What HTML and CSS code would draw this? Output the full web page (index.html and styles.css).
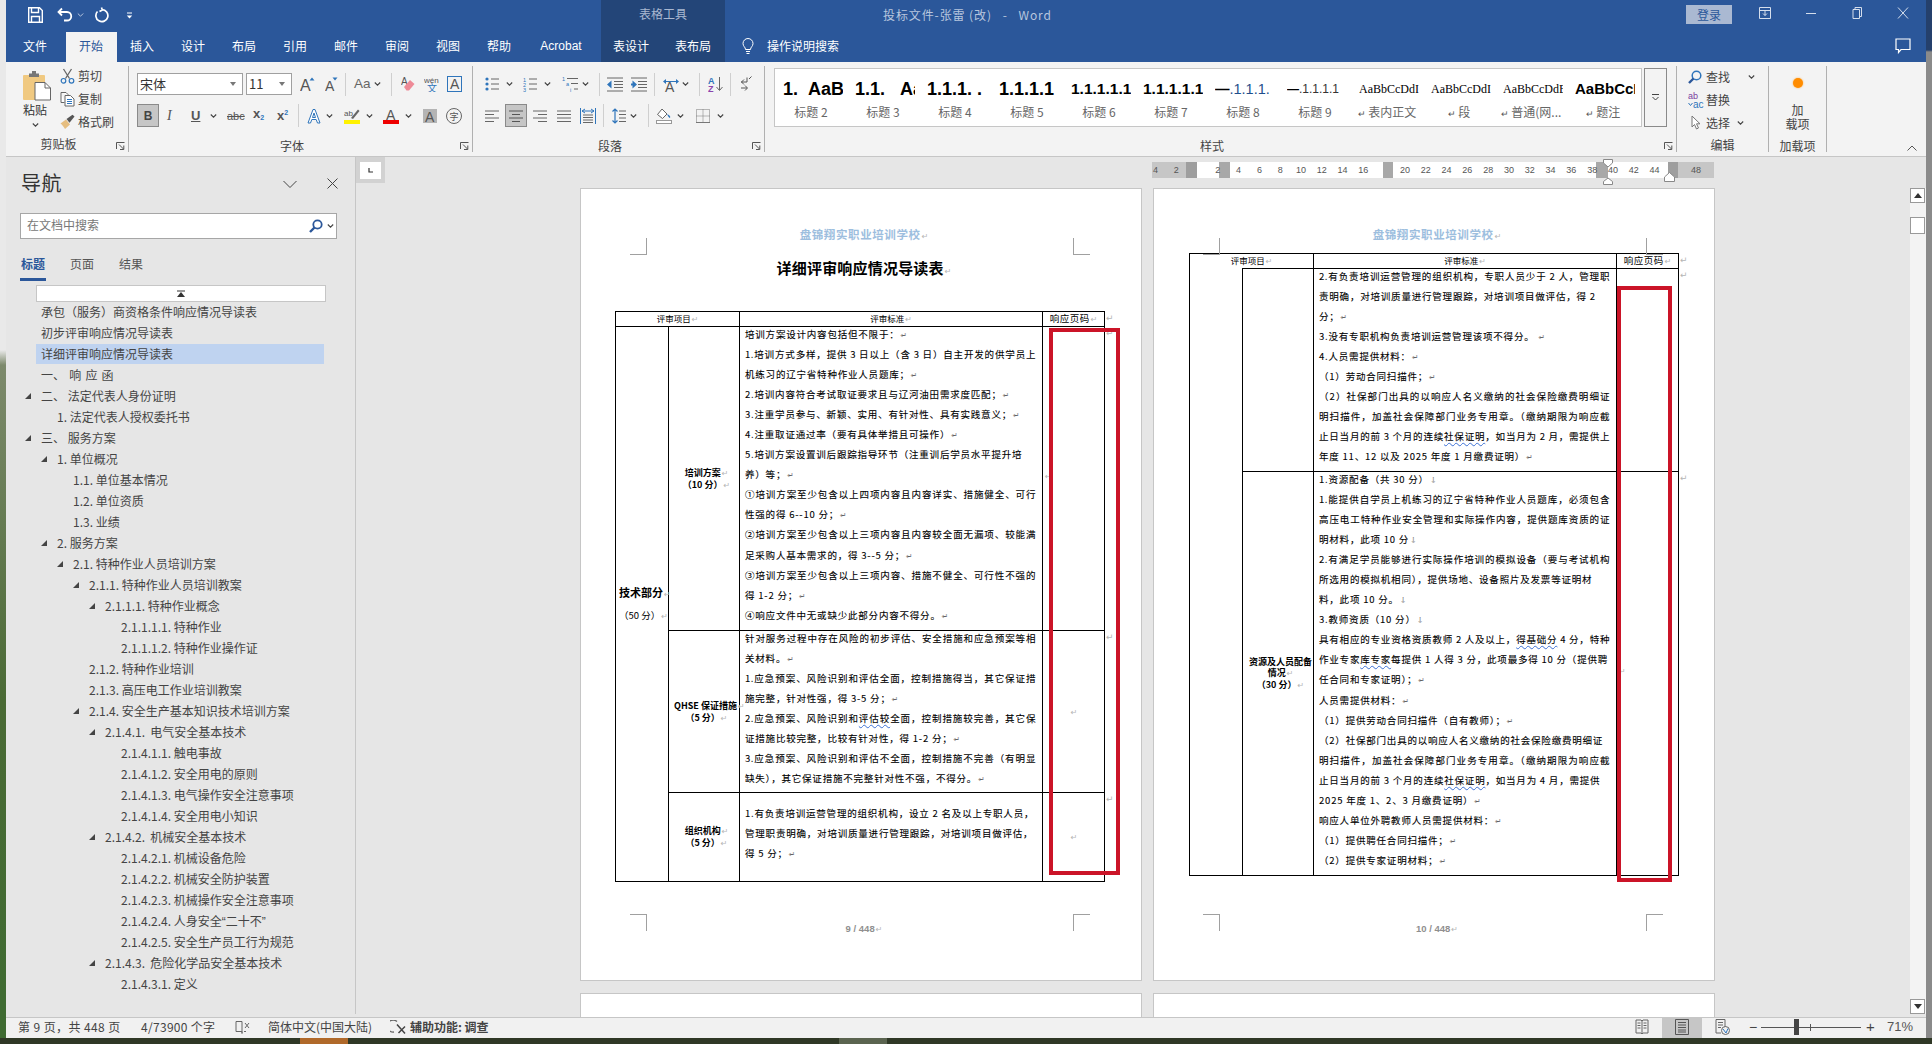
FILE: index.html
```html
<!DOCTYPE html>
<html lang="zh-CN">
<head>
<meta charset="utf-8">
<title>投标文件-张雷 (改) - Word</title>
<link rel="stylesheet" href="styles.css">
</head>
<body>
<svg class="defs" width="0" height="0">
  <symbol id="chev" viewBox="0 0 7 16"><path d="M.8 6.5 3.5 9.2 6.2 6.5" fill="none" stroke="#444" stroke-width="1.1"/></symbol>
  <symbol id="launch" viewBox="0 0 9 8"><path d="M.5 7V.5H8.5M3 2.5 7.5 7M7.8 3.5V7.5H4" fill="none" stroke="#555"/></symbol>
</svg>
<div class="screen">
  <div class="edge-left"></div>
  <div class="window">
    <header class="titlebar">
      <div class="qat">
        <svg class="q-save" width="15" height="16" viewBox="0 0 15 16"><path d="M.7.7H11.5L14.3 3.5V15.3H.7ZM3.5.7V5.5H10.5V.7M3.5 15.3V9.5H11.5V15.3" fill="none" stroke="#fff" stroke-width="1.4"/></svg>
        <svg class="q-undo" width="16" height="16" viewBox="0 0 16 16"><path d="M5 1.5 1.5 5 5 8.5M2 5H10A4.2 4.2 0 0 1 10 13.5H7" fill="none" stroke="#fff" stroke-width="1.8"/></svg>
        <svg class="q-chev" width="7" height="16"><path d="M.8 6.5 3.5 9.2 6.2 6.5" fill="none" stroke="#b9c7de"/></svg>
        <svg class="q-redo" width="15" height="16" viewBox="0 0 15 16"><path d="M8 2.6A6 6 0 1 1 3.5 4.5M7.5 .5 8.3 3 5.5 4.6" fill="none" stroke="#fff" stroke-width="1.7"/></svg>
        <svg class="q-more" width="7" height="16" viewBox="0 0 7 16"><path d="M1 6H6" stroke="#fff"/><path d="M.8 8.5H6.2L3.5 11.5Z" fill="#fff"/></svg>
      </div>
      <div class="ctx-title">表格工具</div>
      <div class="doc-title">投标文件-张雷 (改)&nbsp;&nbsp; -&nbsp;&nbsp; Word</div>
      <button class="login">登录</button>
      <div class="winbtns">
        <svg width="14" height="14" viewBox="0 0 14 14"><path d="M1.5 1.5H12.5V12.5H1.5ZM1.5 4.5H12.5M7 4.5V9.5M5 7.5 7 9.5 9 7.5" fill="none" stroke="#d5deec"/></svg>
        <svg width="14" height="14" viewBox="0 0 14 14"><path d="M2 7.5H12" stroke="#d5deec"/></svg>
        <svg width="14" height="14" viewBox="0 0 14 14"><path d="M3 3.5H9.5V12.5H3ZM5 3.5V1.5H11.5V10.5H9.5" fill="none" stroke="#d5deec"/></svg>
        <svg width="14" height="14" viewBox="0 0 14 14"><path d="M2 1.5 12 12.5M12 1.5 2 12.5" stroke="#d5deec"/></svg>
      </div>
    </header>
    <nav class="tabs">
      <span class="tab tab-file">文件</span>
      <span class="tab active">开始</span>
      <span class="tab">插入</span>
      <span class="tab">设计</span>
      <span class="tab">布局</span>
      <span class="tab">引用</span>
      <span class="tab">邮件</span>
      <span class="tab">审阅</span>
      <span class="tab">视图</span>
      <span class="tab">帮助</span>
      <span class="tab tab-acro">Acrobat</span>
      <div class="ctx-tabs"><span class="tab tab-c1">表设计</span><span class="tab tab-c2">表布局</span></div>
      <svg class="bulb" width="12" height="18" viewBox="0 0 12 18"><path d="M3.5 11.5C3.5 9 1 8.5 1 5.5A5 5 0 0 1 11 5.5C11 8.5 8.5 9 8.5 11.5ZM4 13.5H8M4.5 15.5H7.5" fill="none" stroke="#fff"/></svg>
      <span class="tellme">操作说明搜索</span>
      <svg class="comment" width="16" height="16" viewBox="0 0 16 16"><path d="M1 1H15V11.5H6L3.5 14.5V11.5H1Z" fill="none" stroke="#fff" stroke-width="1.2"/></svg>
    </nav>
    <section class="ribbon">
      <div class="group g-clip">
        <div class="g-body clip-body">
          <div class="paste">
            <svg class="paste-ic" width="30" height="31" viewBox="0 0 30 31"><rect x="1" y="5" width="22" height="25" rx="1" fill="#F0C981"/><path d="M7 5.5V3.5H10V1H14V3.5H17V7H7Z" fill="#777"/><path d="M13 12.5H23L28.5 18V30H13Z" fill="#fff" stroke="#666"/><path d="M23 12.5V18H28.5" fill="none" stroke="#666"/></svg>
            <span class="paste-t">粘贴</span>
            <svg class="paste-c" width="7" height="16"><use href="#chev"/></svg>
          </div>
          <div class="clip-items">
            <div class="clip-row"><svg width="15" height="16" viewBox="0 0 15 16"><path d="M3.5 1 9.5 10.5M11.5 1 5.5 10.5" stroke="#666" stroke-width="1.3" fill="none"/><circle cx="3.5" cy="12.8" r="2.3" stroke="#2F75BB" fill="none" stroke-width="1.2"/><circle cx="11.5" cy="12.8" r="2.3" stroke="#2F75BB" fill="none" stroke-width="1.2"/></svg><span>剪切</span></div>
            <div class="clip-row"><svg width="15" height="16" viewBox="0 0 15 16"><path d="M1 1.5H6L8 3.5V4M1 1.5V11.5H4.5" fill="#fff" stroke="#666"/><path d="M5 4.5H10.5L14 8V15H5Z" fill="#fff" stroke="#666"/><path d="M7 8.5H12M7 10.5H12M7 12.5H12" stroke="#2F75BB"/></svg><span>复制</span></div>
            <div class="clip-row"><svg width="15" height="16" viewBox="0 0 15 16"><path d="M.5 9.5 6 5.5 10 10.5 5 15C4 13 2 10.5.5 9.5Z" fill="#E6BE80"/><path d="M6.5 5 9.5 8.8 14.5 2.5 12.5 .8Z" fill="#555"/></svg><span>格式刷</span></div>
          </div>
        </div>
        <div class="g-label lb">剪贴板</div>
        <svg class="launcher" width="9" height="8"><use href="#launch"/></svg>
      </div>
      <div class="group g-font">
        <div class="g-body pad-font">
          <div class="tr r1">
            <div class="combo w-font"><span>宋体</span><i></i></div>
            <div class="combo w-size ml3"><span>11</span><i></i></div>
            <svg class="ml8" width="16" height="16" viewBox="0 0 16 16"><text x="0" y="15" class="ig lg">A</text><path d="M9.5 4.5 12 1.5 14.5 4.5Z" fill="#2F75BB"/></svg>
            <svg class="ml9" width="13" height="16" viewBox="0 0 13 16"><text x="0" y="15" class="ig md">A</text><path d="M7.5 1.5H12.5L10 4.5Z" fill="#2F75BB"/></svg>
            <span class="sep ml7"></span>
            <span class="aa ml8">Aa</span>
            <svg class="ml3" width="7" height="16"><use href="#chev"/></svg>
            <span class="sep ml10"></span>
            <svg class="ml9" width="14" height="16" viewBox="0 0 14 16"><text x="0" y="9" class="ig sm">A</text><path d="M3 11 9 4 13.5 8 8 14.5H5.5Z" fill="#EE8A97"/></svg>
            <svg class="ml9" width="15" height="16" viewBox="0 0 15 16"><text x="0" y="7" class="ig xs">wén</text><text x="3" y="15.5" class="ig-b">文</text></svg>
            <svg class="ml8" width="15" height="16" viewBox="0 0 15 16"><rect x=".5" y=".5" width="14" height="15" fill="none" stroke="#2F75BB"/><text x="3" y="13" class="ig md">A</text></svg>
          </div>
          <div class="tr r2">
            <span class="toggle"><b>B</b></span>
            <span class="fmt it ml8">I</span>
            <span class="fmt un ml15">U</span>
            <svg class="ml8" width="7" height="16"><use href="#chev"/></svg>
            <span class="fmt st ml10">abc</span>
            <span class="fmt sub ml10">x<small>2</small></span>
            <span class="fmt sup ml12">x<sup>2</sup></span>
            <span class="sep ml8"></span>
            <svg class="ml8" width="14" height="16" viewBox="0 0 14 16"><path d="M1 15 6 1.5H8L13 15H10.5L9.2 11.5H4.8L3.5 15ZM5.5 9.5H8.5L7 5Z" fill="#fff" stroke="#2F75BB"/></svg>
            <svg class="ml5" width="7" height="16"><use href="#chev"/></svg>
            <svg class="ml11" width="16" height="16" viewBox="0 0 16 16"><text x="0" y="8" class="ig xs">ab</text><path d="M7 10 14 1.5 15.5 3 9 11Z" fill="#666"/><rect y="12" width="16" height="4" fill="#FFF200"/></svg>
            <svg class="ml6" width="7" height="16"><use href="#chev"/></svg>
            <svg class="ml10" width="16" height="16" viewBox="0 0 16 16"><text x="3" y="11.5" class="ig md">A</text><rect y="12" width="16" height="4" fill="#EE0000"/></svg>
            <svg class="ml6" width="7" height="16"><use href="#chev"/></svg>
            <svg class="ml11" width="14" height="16" viewBox="0 0 14 16"><rect y="1" width="14" height="14" fill="#B4B4B4"/><text x="2" y="13.5" class="ig md">A</text></svg>
            <svg class="ml9" width="16" height="16" viewBox="0 0 16 16"><circle cx="8" cy="8" r="7.5" fill="none" stroke="#666"/><text x="3.5" y="12" class="ig-c">字</text></svg>
          </div>
        </div>
        <div class="g-label lb">字体</div>
        <svg class="launcher" width="9" height="8"><use href="#launch"/></svg>
      </div>
      <div class="group g-para">
        <div class="g-body pad-para">
          <div class="tr r1">
            <svg width="14" height="16" viewBox="0 0 14 16"><circle cx="2" cy="3" r="1.6" fill="#2F75BB"/><circle cx="2" cy="8" r="1.6" fill="#2F75BB"/><circle cx="2" cy="13" r="1.6" fill="#2F75BB"/><path d="M6 3H14M6 8H14M6 13H14" stroke="#666"/></svg>
            <svg class="ml7" width="7" height="16"><use href="#chev"/></svg>
            <svg class="ml10" width="14" height="16" viewBox="0 0 14 16"><text x="0" y="6" class="nm">1</text><text x="0" y="11" class="nm">2</text><text x="0" y="16" class="nm">3</text><path d="M6 3H14M6 8H14M6 13H14" stroke="#666"/></svg>
            <svg class="ml7" width="7" height="16"><use href="#chev"/></svg>
            <svg class="ml11" width="16" height="16" viewBox="0 0 16 16"><text x="0" y="5" class="nm">1</text><text x="4" y="10" class="nm">a</text><text x="8" y="16" class="nm">i</text><path d="M5 2.5H16M9 7.5H16M12 13H16" stroke="#666"/></svg>
            <svg class="ml4" width="7" height="16"><use href="#chev"/></svg>
            <span class="sep ml10"></span>
            <svg class="ml7" width="16" height="16" viewBox="0 0 16 16"><path d="M0 2H16M7 5.5H16M7 8.5H16M7 11.5H16M0 15H16" stroke="#666"/><path d="M0 8.5 4.5 4.5V12.5Z" fill="#2F75BB"/></svg>
            <svg class="ml8" width="16" height="16" viewBox="0 0 16 16"><path d="M0 2H16M7 5.5H16M7 8.5H16M7 11.5H16M0 15H16" stroke="#666"/><path d="M6 8.5 1.5 4.5V12.5Z" fill="#2F75BB"/><path d="M0 8.5H3" stroke="#2F75BB" stroke-width="2"/></svg>
            <span class="sep ml7"></span>
            <svg class="ml7" width="18" height="16" viewBox="0 0 18 16"><text x="3" y="16" class="ig md">A</text><path d="M1 5.5 4 3V8ZM17 5.5 14 3V8Z" fill="#2F75BB"/><path d="M3 5.5H15" stroke="#2F75BB"/></svg>
            <svg class="ml2" width="7" height="16"><use href="#chev"/></svg>
            <span class="sep ml10"></span>
            <svg class="ml8" width="15" height="16" viewBox="0 0 15 16"><text x="0" y="7.5" class="az-a">A</text><text x="0" y="15.5" class="az-z">Z</text><path d="M11.5 1V14M8.5 11 11.5 14.5 14.5 11" fill="none" stroke="#666"/></svg>
            <span class="sep ml7"></span>
            <svg class="ml10" width="11" height="16" viewBox="0 0 11 16"><path d="M6 1.5V6H0M8 3 10.5 .5M3 3.5 .5 6 3 8.5M0 12H6M4 9.5 6.5 12 4 14.5" fill="none" stroke="#555"/></svg>
          </div>
          <div class="tr r2">
            <svg width="14" height="16" viewBox="0 0 14 16"><path d="M0 3H14M0 6.5H9M0 10H14M0 13.5H9" stroke="#666"/></svg>
            <span class="toggle ml6"><svg width="14" height="16" viewBox="0 0 14 16"><path d="M0 3H14M3 6.5H11M0 10H14M3 13.5H11" stroke="#555"/></svg></span>
            <svg class="ml6" width="14" height="16" viewBox="0 0 14 16"><path d="M0 3H14M5 6.5H14M0 10H14M5 13.5H14" stroke="#666"/></svg>
            <svg class="ml10" width="14" height="16" viewBox="0 0 14 16"><path d="M0 3H14M0 6.5H14M0 10H14M0 13.5H14" stroke="#666"/></svg>
            <svg class="ml9" width="16" height="16" viewBox="0 0 16 16"><path d="M.5 0V16M15.5 0V16" stroke="#2F75BB"/><path d="M2 3H14M5 1 2 3 5 5M11 1 14 3 11 5" fill="none" stroke="#2F75BB"/><path d="M3 7H13M3 9.5H13M3 12H13M3 14.5H13" stroke="#666"/></svg>
            <span class="sep ml7"></span>
            <svg class="ml8" width="14" height="16" viewBox="0 0 14 16"><path d="M3 1V15M.5 3.5 3 1 5.5 3.5M.5 12.5 3 15 5.5 12.5" fill="none" stroke="#2F75BB" stroke-width="1.2"/><path d="M7 3H14M7 6.5H14M7 10H14M7 13.5H14" stroke="#666"/></svg>
            <svg class="ml4" width="7" height="16"><use href="#chev"/></svg>
            <span class="sep ml11"></span>
            <svg class="ml7" width="16" height="16" viewBox="0 0 16 16"><path d="M6 1 11 6 6.5 10.5 1.5 6.5Z" fill="#fff" stroke="#666"/><path d="M11 6C13 7 15 8 14 10 12.5 9.5 12 8 11 6Z" fill="#2F75BB"/><rect x=".5" y="12.5" width="15" height="3" fill="#fff" stroke="#999"/></svg>
            <svg class="ml5" width="7" height="16"><use href="#chev"/></svg>
            <svg class="ml12" width="14" height="16" viewBox="0 0 14 16"><rect x=".5" y="1.5" width="13" height="13" fill="none" stroke="#777" stroke-dasharray="1 1"/><path d="M7 1.5V14.5M.5 8H13.5" stroke="#777" stroke-dasharray="1 1"/><path d="M0 14.5H14" stroke="#777"/></svg>
            <svg class="ml7" width="7" height="16"><use href="#chev"/></svg>
          </div>
        </div>
        <div class="g-label lb">段落</div>
        <svg class="launcher" width="9" height="8"><use href="#launch"/></svg>
      </div>
      <div class="group g-style">
        <div class="g-body gallery-wrap">
          <div class="gallery">
            <div class="st-cell"><div class="st-s s1">1.&nbsp;&nbsp;AaBb</div><div class="st-l">标题 2</div></div>
            <div class="st-cell"><div class="st-s s1">1.1.&nbsp;&nbsp;&nbsp;AaB</div><div class="st-l">标题 3</div></div>
            <div class="st-cell"><div class="st-s s1">1.1.1.&nbsp;.</div><div class="st-l">标题 4</div></div>
            <div class="st-cell"><div class="st-s s1">1.1.1.1</div><div class="st-l">标题 5</div></div>
            <div class="st-cell"><div class="st-s s4">1.1.1.1.1</div><div class="st-l">标题 6</div></div>
            <div class="st-cell"><div class="st-s s4">1.1.1.1.1</div><div class="st-l">标题 7</div></div>
            <div class="st-cell"><div class="st-s s5"><b>—</b><span>.1.1.1.</span></div><div class="st-l">标题 8</div></div>
            <div class="st-cell"><div class="st-s s5b"><b>—</b><em>.1.1.1.1</em></div><div class="st-l">标题 9</div></div>
            <div class="st-cell"><div class="st-s s6">AaBbCcDdI</div><div class="st-l"><span class="pm-s">↵</span> 表内正文</div></div>
            <div class="st-cell"><div class="st-s s6">AaBbCcDdI</div><div class="st-l"><span class="pm-s">↵</span> 段</div></div>
            <div class="st-cell"><div class="st-s s6">AaBbCcDdE</div><div class="st-l"><span class="pm-s">↵</span> 普通(网...</div></div>
            <div class="st-cell"><div class="st-s s8">AaBbCcDd</div><div class="st-l"><span class="pm-s">↵</span> 题注</div></div>
          </div>
          <div class="gal-more"><svg width="9" height="9" viewBox="0 0 9 9"><path d="M1 1.5H8" stroke="#444"/><path d="M1.5 4 4.5 7 7.5 4" fill="none" stroke="#444"/></svg></div>
        </div>
        <div class="g-label lb">样式</div>
        <svg class="launcher" width="9" height="8"><use href="#launch"/></svg>
      </div>
      <div class="group g-edit">
        <div class="g-body edit-body">
          <div class="ed-row"><svg width="14" height="14" viewBox="0 0 14 14"><circle cx="8.5" cy="5.5" r="4.3" fill="none" stroke="#2F75BB" stroke-width="1.5"/><path d="M5.5 8.5 1 13" stroke="#2B579A" stroke-width="2.4"/></svg><span>查找</span><svg class="ed-c1" width="7" height="16"><use href="#chev"/></svg></div>
          <div class="ed-row"><svg width="16" height="16" viewBox="0 0 16 16"><text x="0" y="7" class="ab">ab</text><text x="5" y="15.5" class="ac">ac</text><path d="M.5 11 2.5 13.5 4.5 11" fill="none" stroke="#2F75BB"/></svg><span>替换</span></div>
          <div class="ed-row"><svg class="ed-arrow" width="10" height="15" viewBox="0 0 10 15"><path d="M1 1V12L3.5 9.5 5.5 14 7.5 13 5.5 8.8H9Z" fill="#fff" stroke="#777"/></svg><span>选择</span><svg class="ed-c2" width="7" height="16"><use href="#chev"/></svg></div>
        </div>
        <div class="g-label">编辑</div>
      </div>
      <div class="group g-add">
        <div class="g-body add-body">
          <i class="dot"></i>
          <span>加</span>
          <span>载项</span>
        </div>
        <div class="g-label">加载项</div>
      </div>
      <svg class="collapse" width="10" height="6" viewBox="0 0 10 6"><path d="M.5 5.5 5 1 9.5 5.5" fill="none" stroke="#555"/></svg>
    </section>
    <main class="main">
      <aside class="nav">
        <div class="nav-head">
          <span class="nav-title">导航</span>
          <svg class="nav-chev" width="14" height="8" viewBox="0 0 14 8"><path d="M.5 1 7 7.5 13.5 1" fill="none" stroke="#444"/></svg>
          <svg class="nav-x" width="11" height="11" viewBox="0 0 11 11"><path d="M.5.5 10.5 10.5M10.5.5.5 10.5" stroke="#444"/></svg>
        </div>
        <div class="nav-search">
          <span>在文档中搜索</span>
          <svg width="14" height="14" viewBox="0 0 14 14"><circle cx="8.5" cy="5.5" r="4.2" fill="none" stroke="#2B579A" stroke-width="1.8"/><path d="M5.5 8.5 1 13" stroke="#2B579A" stroke-width="2.4"/></svg>
          <svg class="ns-c" width="7" height="16"><use href="#chev"/></svg>
        </div>
        <div class="nav-tabs"><span class="on">标题</span><span>页面</span><span>结果</span></div>
        <div class="tree-top"><svg width="8" height="7" viewBox="0 0 8 7"><path d="M0 1H8" stroke="#333"/><path d="M4 2 8 7H0Z" fill="#333"/></svg></div>
        <ul class="tree">
          <li class="l0">承包（服务）商资格条件响应情况导读表</li>
          <li class="l0">初步评审响应情况导读表</li>
          <li class="l0 sel">详细评审响应情况导读表</li>
          <li class="l0 wide">一、 响 应 函</li>
          <li class="l0 open">二、 法定代表人身份证明</li>
          <li class="l1">1. 法定代表人授权委托书</li>
          <li class="l0 open">三、 服务方案</li>
          <li class="l1 open">1. 单位概况</li>
          <li class="l2">1.1. 单位基本情况</li>
          <li class="l2">1.2. 单位资质</li>
          <li class="l2">1.3. 业绩</li>
          <li class="l1 open">2. 服务方案</li>
          <li class="l2 open">2.1. 特种作业人员培训方案</li>
          <li class="l3 open">2.1.1. 特种作业人员培训教案</li>
          <li class="l4 open">2.1.1.1. 特种作业概念</li>
          <li class="l5">2.1.1.1.1. 特种作业</li>
          <li class="l5">2.1.1.1.2. 特种作业操作证</li>
          <li class="l3">2.1.2. 特种作业培训</li>
          <li class="l3">2.1.3. 高压电工作业培训教案</li>
          <li class="l3 open">2.1.4. 安全生产基本知识技术培训方案</li>
          <li class="l4 open">2.1.4.1.&nbsp; 电气安全基本技术</li>
          <li class="l5">2.1.4.1.1. 触电事故</li>
          <li class="l5">2.1.4.1.2. 安全用电的原则</li>
          <li class="l5">2.1.4.1.3. 电气操作安全注意事项</li>
          <li class="l5">2.1.4.1.4. 安全用电小知识</li>
          <li class="l4 open">2.1.4.2.&nbsp; 机械安全基本技术</li>
          <li class="l5">2.1.4.2.1. 机械设备危险</li>
          <li class="l5">2.1.4.2.2. 机械安全防护装置</li>
          <li class="l5">2.1.4.2.3. 机械操作安全注意事项</li>
          <li class="l5">2.1.4.2.4. 人身安全<span class="q">“</span>二十不<span class="q">”</span></li>
          <li class="l5">2.1.4.2.5. 安全生产员工行为规范</li>
          <li class="l4 open">2.1.4.3.&nbsp; 危险化学品安全基本技术</li>
          <li class="l5">2.1.4.3.1. 定义</li>
        </ul>
      </aside>
      <section class="doc">
        <div class="ruler-row">
          <div class="corner"><div class="corner-in"><svg width="5" height="5" viewBox="0 0 5 5"><path d="M1 0V4H5" fill="none" stroke="#333" stroke-width="1.2"/></svg></div></div>
          <div class="ruler">
            <div class="ticks"><span>4</span><span>2</span><span></span><span>2</span><span>4</span><span>6</span><span>8</span><span>10</span><span>12</span><span>14</span><span>16</span><span></span><span>20</span><span>22</span><span>24</span><span>26</span><span>28</span><span>30</span><span>32</span><span>34</span><span>36</span><span>38</span><span>40</span><span>42</span><span>44</span><span></span><span>48</span></div>
            <svg class="mk-a" width="10" height="26" viewBox="0 0 10 26"><path d="M.5.5H9.5V4L5 8 .5 4ZM5 19 9.5 22.5V25.5H.5V22.5Z" fill="#fff" stroke="#888"/></svg>
            <svg class="mk-b" width="11" height="10" viewBox="0 0 11 10"><path d="M5.5.5 10.5 5V9.5H.5V5Z" fill="#fff" stroke="#888"/></svg>
          </div>
        </div>
        <div class="pages">
          <article class="page p1">
            <i class="crop tl"></i><i class="crop tr"></i><i class="crop bl"></i><i class="crop br"></i>
            <div class="pg-head">盘锦翔实职业培训学校<span class="pm">↵</span></div>
            <h1 class="pg-title">详细评审响应情况导读表<span class="pm">↵</span></h1>
            <table class="grid">
              <colgroup><col class="c1"><col class="c2"><col class="c3"><col class="c4"></colgroup>
              <tr class="hd"><th colspan="2">评审项目<span class="pm">↵</span></th><th>评审标准<span class="pm">↵</span></th><th class="resp">响应页码<span class="pm">↵</span><span class="eor">↵</span></th></tr>
              <tr class="h304">
                <td rowspan="3" class="cat"><b>技术部分</b><span class="pm">↵</span><br>（50 分）<span class="pm">↵</span></td>
                <td class="lab"><b>培训方案</b><span class="pm">↵</span><br><b>（10 分）</b><span class="pm">↵</span></td>
                <td class="txt"><div class="lines">
                  <div class="ln">培训方案设计内容包括但不限于：<span class="pm">↵</span></div>
                  <div class="ln fit">1.培训方式多样，提供 3 日以上（含 3 日）自主开发的供学员上</div>
                  <div class="ln">机练习的辽宁省特种作业人员题库；<span class="pm">↵</span></div>
                  <div class="ln">2.培训内容符合考试取证要求且与辽河油田需求度匹配；<span class="pm">↵</span></div>
                  <div class="ln">3.注重学员参与、新颖、实用、有针对性、具有实践意义；<span class="pm">↵</span></div>
                  <div class="ln">4.注重取证通过率（要有具体举措且可操作）<span class="pm">↵</span></div>
                  <div class="ln">5.培训方案设置训后跟踪指导环节（注重训后学员水平提升培</div>
                  <div class="ln">养）等；<span class="pm">↵</span></div>
                  <div class="ln fit">①培训方案至少包含以上四项内容且内容详实、措施健全、可行</div>
                  <div class="ln">性强的得 6--10 分；<span class="pm">↵</span></div>
                  <div class="ln fit">②培训方案至少包含以上三项内容且内容较全面无漏项、较能满</div>
                  <div class="ln">足采购人基本需求的，得 3--5 分；<span class="pm">↵</span></div>
                  <div class="ln fit">③培训方案至少包含以上三项内容、措施不健全、可行性不强的</div>
                  <div class="ln">得 1-2 分；<span class="pm">↵</span></div>
                  <div class="ln">④响应文件中无或缺少此部分内容不得分。<span class="pm">↵</span></div>
                </div></td>
                <td class="resp-c start"><span class="pm">↵</span><span class="eor">↵</span></td>
              </tr>
              <tr class="h162">
                <td class="lab"><b>QHSE 保证措施</b><span class="pm">↵</span><br><b>（5 分）</b><span class="pm">↵</span></td>
                <td class="txt"><div class="lines">
                  <div class="ln fit">针对服务过程中存在风险的初步评估、安全措施和应急预案等相</div>
                  <div class="ln">关材料。<span class="pm">↵</span></div>
                  <div class="ln fit">1.应急预案、风险识别和评估全面，控制措施得当，其它保证措</div>
                  <div class="ln">施完整，针对性强，得 3-5 分；<span class="pm">↵</span></div>
                  <div class="ln fit">2.应急预案、风险识别和<u>评估较</u>全面，控制措施较完善，其它保</div>
                  <div class="ln">证措施比较完整，比较有针对性，得 1-2 分；<span class="pm">↵</span></div>
                  <div class="ln fit">3.应急预案、风险识别和评估不全面，控制措施不完善（有明显</div>
                  <div class="ln">缺失），其它保证措施不完整针对性不强，不得分。<span class="pm">↵</span></div>
                </div></td>
                <td class="resp-c"><span class="pm">↵</span><span class="eor">↵</span></td>
              </tr>
              <tr class="h89">
                <td class="lab"><b>组织机构</b><span class="pm">↵</span><br><b>（5 分）</b><span class="pm">↵</span></td>
                <td class="txt"><div class="lines low">
                  <div class="ln">1.有负责培训运营管理的组织机构，设立 2 名及以上专职人员，</div>
                  <div class="ln">管理职责明确，对培训质量进行管理跟踪，对培训项目做评估，</div>
                  <div class="ln">得 5 分；<span class="pm">↵</span></div>
                </div></td>
                <td class="resp-c"><span class="pm">↵</span><span class="eor">↵</span></td>
              </tr>
            </table>
            <i class="redbox rb1"></i>
            <div class="pg-foot">9 / 448<span class="pm">↵</span></div>
          </article>
          <article class="page p2">
            <i class="crop tl"></i><i class="crop tr"></i><i class="crop bl"></i><i class="crop br"></i>
            <div class="pg-head">盘锦翔实职业培训学校<span class="pm">↵</span></div>
            <table class="grid">
              <colgroup><col class="c1"><col class="c2"><col class="c3"><col class="c4"></colgroup>
              <tr class="hd"><th colspan="2" class="nob">评审项目<span class="pm">↵</span></th><th>评审标准<span class="pm">↵</span></th><th class="resp">响应页码<span class="pm">↵</span><span class="eor">↵</span></th></tr>
              <tr class="h203">
                <td rowspan="2" class="cat not"></td>
                <td class="lab"></td>
                <td class="txt"><div class="lines">
                  <div class="ln fit">2.有负责培训运营管理的组织机构，专职人员少于 2 人，管理职</div>
                  <div class="ln">责明确，对培训质量进行管理跟踪，对培训项目做评估，得 2</div>
                  <div class="ln">分；<span class="pm">↵</span></div>
                  <div class="ln">3.没有专职机构负责培训运营管理该项不得分。 <span class="pm">↵</span></div>
                  <div class="ln">4.人员需提供材料：<span class="pm">↵</span></div>
                  <div class="ln">（1）劳动合同扫描件；<span class="pm">↵</span></div>
                  <div class="ln fit">（2）社保部门出具的以响应人名义缴纳的社会保险缴费明细证</div>
                  <div class="ln fit">明扫描件，加盖社会保障部门业务专用章。（缴纳期限为响应截</div>
                  <div class="ln fit">止日当月的前 3 个月的连续<u>社保证明</u>，如当月为 2 月，需提供上</div>
                  <div class="ln">年度 11、12 以及 2025 年度 1 月缴费证明）<span class="pm">↵</span></div>
                </div></td>
                <td class="resp-c"><span class="eor">↵</span></td>
              </tr>
              <tr class="h404">
                <td class="lab"><b>资源及人员配备</b><br><b>情况</b><span class="pm">↵</span><br><b>（30 分）</b><span class="pm">↵</span></td>
                <td class="txt"><div class="lines">
                  <div class="ln">1.资源配备（共 30 分）<span class="pm">↓</span></div>
                  <div class="ln fit">1.能提供自学员上机练习的辽宁省特种作业人员题库，必须包含</div>
                  <div class="ln fit">高压电工特种作业安全管理和实际操作内容，提供题库资质的证</div>
                  <div class="ln">明材料，此项 10 分<span class="pm">↓</span></div>
                  <div class="ln fit">2.有满足学员能够进行实际操作培训的模拟设备（要与考试机构</div>
                  <div class="ln">所选用的模拟机相同），提供场地、设备照片及发票等证明材</div>
                  <div class="ln">料，此项 10 分。<span class="pm">↓</span></div>
                  <div class="ln">3.教师资质（10 分）<span class="pm">↓</span></div>
                  <div class="ln fit">具有相应的专业资格资质教师 2 人及以上，<u>得基础分</u> 4 分，特种</div>
                  <div class="ln">作业专家<u>库专家</u>每提供 1 人得 3 分，此项最多得 10 分（提供聘</div>
                  <div class="ln">任合同和专家证明）；<span class="pm">↵</span></div>
                  <div class="ln">人员需提供材料：<span class="pm">↵</span></div>
                  <div class="ln">（1）提供劳动合同扫描件（自有教师）；<span class="pm">↵</span></div>
                  <div class="ln">（2）社保部门出具的以响应人名义缴纳的社会保险缴费明细证</div>
                  <div class="ln fit">明扫描件，加盖社会保障部门业务专用章。（缴纳期限为响应截</div>
                  <div class="ln">止日当月的前 3 个月的连续<u>社保证明</u>，如当月为 4 月，需提供</div>
                  <div class="ln">2025 年度 1、2、3 月缴费证明）<span class="pm">↵</span></div>
                  <div class="ln">响应人单位外聘教师人员需提供材料：<span class="pm">↵</span></div>
                  <div class="ln">（1）提供聘任合同扫描件；<span class="pm">↵</span></div>
                  <div class="ln">（2）提供专家证明材料；<span class="pm">↵</span></div>
                </div></td>
                <td class="resp-c start"><span class="pm">↵</span><span class="eor">↵</span></td>
              </tr>
            </table>
            <i class="redbox rb2"></i>
            <div class="pg-foot">10 / 448<span class="pm">↵</span></div>
          </article>
          <article class="page"></article>
          <article class="page"></article>
        </div>
      </section>
      <div class="vscroll">
        <div class="sb-btn"><svg width="8" height="5" viewBox="0 0 8 5"><path d="M4 0 8 5H0Z" fill="#333"/></svg></div>
        <div class="sb-thumb"></div>
        <div class="sb-btn down"><svg width="8" height="5" viewBox="0 0 8 5"><path d="M0 0H8L4 5Z" fill="#333"/></svg></div>
      </div>
    </main>
    <footer class="status">
      <span class="s-page">第 9 页，共 448 页</span>
      <span class="s-words">4/73900 个字</span>
      <svg class="s-book" width="15" height="14" viewBox="0 0 15 14"><path d="M7 1.5H1V11.5H7V13.5M7 1.5V13.5M10 3 14 8M14 3 10 8M9 11.5H11" fill="none" stroke="#666"/></svg>
      <span class="s-lang">简体中文(中国大陆)</span>
      <svg class="s-acc" width="17" height="15" viewBox="0 0 17 15"><path d="M7 1.5A6 6 0 1 0 4 12" fill="none" stroke="#666" stroke-width="1.3"/><path d="M7 4.5 15 13.5M15 6.5 8.5 13" stroke="#444" stroke-width="1.5"/></svg>
      <span class="s-acc-t">辅助功能: 调查</span>
      <div class="s-right">
        <svg width="14" height="18" viewBox="0 0 14 18"><path d="M1 2H6L7 3 8 2H13V15H8L7 16 6 15H1ZM7 3V16M2.5 5H5.5M2.5 7.5H5.5M2.5 10H5.5M8.5 5H11.5M8.5 7.5H11.5M8.5 10H11.5" fill="none" stroke="#666"/></svg>
        <span class="s-active"><svg width="14" height="16" viewBox="0 0 14 16"><path d="M.5.5H13.5V15.5H.5ZM3 3.5H11M3 6H11M3 8.5H11M3 11H11M3 13H11" fill="none" stroke="#555"/></svg></span>
        <svg class="s-web" width="15" height="18" viewBox="0 0 15 18"><path d="M1 1.5H10V9M1 1.5V15H6M3 4.5H8M3 7H8M3 9.5H6" fill="none" stroke="#666"/><circle cx="10.5" cy="12.5" r="4" fill="none" stroke="#666"/><path d="M8 11 11 15 13 10.5" fill="none" stroke="#2F75BB"/></svg>
        <span class="z-minus">−</span>
        <div class="slider"><i class="s-tick"></i><i class="s-thumb"></i></div>
        <span class="z-plus">+</span>
        <span class="z-val">71%</span>
      </div>
    </footer>
  </div>
  <div class="edge-right"></div>
</div>
<div class="taskbar"><span class="tb-a"></span><span class="tb-b"></span></div>
</body>
</html>
```
FILE: styles.css
```css
*{box-sizing:border-box}
html{height:1044px;overflow:hidden}
html,body{margin:0;padding:0}
body{width:1932px;height:1044px;overflow:hidden;font-family:"Noto Sans CJK SC","Liberation Sans",sans-serif;font-size:12px;color:#444;background:#2f3826}
svg{display:block;flex:none}
.defs{position:absolute}
ul{list-style:none;margin:0;padding:0}
i{font-style:normal}

.screen{display:flex;height:1038px}
.edge-left{width:6px;background:linear-gradient(#e9e9e9 0,#e9e9e9 350px,#7d8a6c 365px,#4a6a35 700px,#3f6b32 1000px)}
.edge-right{width:6px;background:linear-gradient(#25406c 0,#25406c 50px,#8a8a8a 52px,#8a8a8a 100%)}
.window{flex:1;min-width:0;display:flex;flex-direction:column;background:#e6e6e6}

.titlebar{height:32px;background:#2b579a;display:flex;align-items:flex-start;flex:none;color:#fff}
.qat{display:flex;align-items:center;height:30px;width:595px;flex:none}
.q-save{margin-left:22px}
.q-undo{margin-left:14px}
.q-chev{margin-left:4px}
.q-redo{margin-left:10px}
.q-more{margin-left:17px}
.ctx-title{width:124px;height:32px;background:#234578;color:#a9b8d1;text-align:center;line-height:27px;flex:none}
.doc-title{margin-left:158px;width:803px;color:#b7c6de;line-height:30px;flex:none;white-space:nowrap;letter-spacing:.9px}
.login{margin-top:5px;width:46px;height:19px;border:0;padding:0;background:#aab9d2;color:#2b579a;font:12px/19px "Noto Sans CJK SC",sans-serif;flex:none}
.winbtns{display:flex;margin-top:6px;margin-left:26px;gap:32px}

.tabs{height:30px;background:#2b579a;display:flex;align-items:stretch;padding-left:3.5px;color:#fff;flex:none;position:relative}
.tab{width:51px;text-align:center;line-height:28px;flex:none}
.tab-file{margin-right:5px}
.tab.active{background:#f3f3f3;color:#2b579a;height:30px}
.tab-acro{width:76.5px;padding-right:3.5px;font-family:"Liberation Sans",sans-serif}
.ctx-tabs{display:flex;width:124px;background:#234578;flex:none}
.tab-c1{width:60px}
.tab-c2{width:64px}
.bulb{margin:6px 0 0 17px}
.tellme{margin-left:13px;line-height:28px;white-space:nowrap;color:#fff}
.comment{position:absolute;right:15px;top:6px}

.ribbon{height:95px;background:#f3f3f3;border-bottom:1px solid #c6c6c6;display:flex;flex:none;position:relative}
.group{margin-top:4px;height:86px;border-right:1px solid #b0b0b0;position:relative;flex:none;display:flex;flex-direction:column}
.g-clip{width:123px}
.g-font{width:344px}
.g-para{width:292px}
.g-style{width:912px}
.g-edit{width:92px}
.g-add{width:58px}
.g-body{height:72px;flex:none}
.g-label{height:16px;line-height:16px;text-align:center;color:#444;font-size:12px}
.lb{padding-right:17px}
.launcher{position:absolute;right:3px;bottom:2px}
.ml2{margin-left:2px}.ml3{margin-left:3px}.ml4{margin-left:4px}.ml5{margin-left:5px}.ml6{margin-left:6px}.ml7{margin-left:7px}.ml8{margin-left:8px}.ml9{margin-left:9px}.ml10{margin-left:10px}.ml11{margin-left:11px}.ml12{margin-left:12px}.ml15{margin-left:15px}

.clip-body{display:flex;margin-top:-2px}
.paste{width:26px;margin-left:16px;display:flex;flex-direction:column;align-items:center;padding-top:6px;flex:none}
.paste-ic{margin-left:4px}
.paste-t{line-height:16px;margin-top:1px;color:#333}
.paste-c{margin-top:-1px}
.clip-items{margin-left:12px}
.clip-row{height:23px;display:flex;align-items:center;gap:3px;color:#444}

.pad-font{padding:7px 0 0 8px}
.pad-para{padding:7px 0 0 12px}
.tr{display:flex;align-items:center}
.r1{height:22px}
.r2{height:23px;margin-top:9px}
.sep{width:1px;height:23px;background:#cfcfcf;flex:none}
.combo{height:22px;background:#fff;border:1px solid #a0a0a0;display:flex;align-items:center;padding:0 6px 0 2px;font-size:13px;color:#333;flex:none}
.combo span{flex:1;line-height:18px}
.combo i{width:0;height:0;border:3.5px solid transparent;border-top:4px solid #777;border-bottom:0}
.w-font{width:106px}
.w-size{width:46px}
.aa{font:13.5px/22px "Liberation Sans",sans-serif;color:#666;width:17px;white-space:nowrap}
.toggle{width:22px;height:23px;background:#c6c6c6;border:1px solid #8a8a8a;display:flex;align-items:center;justify-content:center;color:#444;font:bold 12px "Liberation Sans",sans-serif;flex:none}
.fmt{font-family:"Liberation Sans",sans-serif;color:#555;font-size:13px;line-height:20px;flex:none;white-space:nowrap}
.it{font-style:italic;font-family:"Liberation Serif",serif;width:9px;font-size:14px}
.un{text-decoration:underline;width:11px;font-weight:bold}
.st{text-decoration:line-through;width:16px;font-size:11px}
.sub{width:12px;font-weight:bold}
.sub small{font-size:7px;color:#2f75bb;vertical-align:-2px}
.sup{width:13px;font-weight:bold}
.sup sup{font-size:7px;color:#2f75bb;line-height:0}
.ig{font-family:"Liberation Sans",sans-serif;fill:#555}
.lg{font-size:16px}
.md{font-size:14px}
.sm{font-size:10px}
.xs{font-size:8px}
.ig-b{font-size:10px;fill:#2f75bb}
.ig-c{font-size:9px;fill:#555}
.nm{font:5.5px "Liberation Sans",sans-serif;fill:#2f75bb}
.az-a{font:bold 9px "Liberation Sans",sans-serif;fill:#2f75bb}
.az-z{font:bold 9px "Liberation Sans",sans-serif;fill:#8b44ad}
.ab{font:9px "Liberation Sans",sans-serif;fill:#7a3ea0}
.ac{font:10px "Liberation Sans",sans-serif;fill:#2f75bb}

.gallery-wrap{display:flex;padding:2px 0 0 9px}
.gallery{width:868px;height:59px;background:#fff;border:1px solid #c6c6c6;display:flex;flex:none}
.st-cell{width:72px;flex:none;padding:8px 4px 0 8px;overflow:hidden}
.st-s{height:24px;line-height:24px;white-space:nowrap;overflow:hidden;color:#000;font-family:"Liberation Sans",sans-serif;font-weight:bold}
.s1{font-size:18px}
.s4{font-size:15.5px}
.s5{font-size:14.5px;font-weight:normal}
.s5b{font-size:12px;font-weight:normal}
.s5 span{color:#1f4e8c}
.s5b em{font-style:normal;color:#333}
.s6{font:12px/24px "Liberation Serif",serif}
.s8{font-size:15px}
.st-l{margin:3px 0 0 -8px;width:72px;text-align:center;color:#666;font-size:12px;line-height:16px;white-space:nowrap}
.pm-s{font-size:9px;color:#555}
.gal-more{width:23px;height:59px;margin-left:2px;border:1px solid #8a8a8a;display:flex;align-items:center;justify-content:center;flex:none}

.edit-body{padding:0 0 0 11px;margin-top:-1px}
.ed-row{height:23px;display:flex;align-items:center;position:relative}
.ed-row span{position:absolute;left:18px;color:#444;width:28px}
.ed-c1{position:absolute;left:60px}
.ed-c2{position:absolute;left:49px}
.ed-arrow{margin-left:3px}
.add-body{display:flex;flex-direction:column;align-items:center;color:#444;line-height:14px}
.dot{width:10px;height:10px;border-radius:50%;background:#ff8c00;box-shadow:0 0 2px #ffb04d;margin:12px 0 15px}
.collapse{position:absolute;right:9px;bottom:5px}

.main{flex:1;min-height:0;display:flex;background:#e6e6e6}
.nav{width:350px;flex:none;border-right:1px solid #c6c6c6;margin-bottom:3px;padding-top:10px;overflow:hidden}
.nav-head{height:32px;display:flex;align-items:center;position:relative;padding-left:15px}
.nav-title{font-size:20px;line-height:32px;color:#333;letter-spacing:.5px}
.nav-chev{position:absolute;left:277px;top:13px}
.nav-x{position:absolute;left:321px;top:11px}
.nav-search{margin:14px 0 0 14px;width:317px;height:26px;background:#fff;border:1px solid #a6a6a6;display:flex;align-items:center;padding-left:6px;color:#777}
.nav-search span{width:282px;line-height:20px;margin-top:-3px}
.ns-c{margin-left:4px}
.nav-tabs{margin:13px 0 0 15px;display:flex;gap:25px;height:29px;line-height:24px;color:#555}
.nav-tabs span{width:24px;white-space:nowrap;position:relative}
.nav-tabs .on{color:#2b579a;font-weight:bold}
.nav-tabs .on::after{content:"";position:absolute;left:-1px;width:26px;height:3px;background:#2b579a;top:26px}
.tree-top{margin:4px 0 0 30px;width:290px;height:17px;background:#fff;border:1px solid #c6c6c6;display:flex;align-items:center;justify-content:center}
.tree li{height:21px;line-height:20px;white-space:nowrap;position:relative;color:#444;font-size:12px}
.tree .sel{background:linear-gradient(#bfd3f0,#bfd3f0) no-repeat 30px 0/288px 20px}
.tree .wide{word-spacing:1.5px}
.q{font-family:"Liberation Sans",sans-serif}
.l0{padding-left:35px}
.l1{padding-left:51px}
.l2{padding-left:67px}
.l3{padding-left:83px}
.l4{padding-left:99px}
.l5{padding-left:115px}
.open::before{content:"";position:absolute;top:7px;width:0;height:0;border-style:solid;border-width:0 0 6px 6px;border-color:transparent transparent #444 transparent}
.l0.open::before{left:19px}
.l1.open::before{left:35px}
.l2.open::before{left:51px}
.l3.open::before{left:67px}
.l4.open::before{left:83px}

.doc{flex:1;min-width:0;overflow:hidden;display:flex;flex-direction:column}
.ruler-row{height:31px;flex:none;display:flex;align-items:flex-start}
.corner{width:29px;height:26px;background:#d2d2d2;padding:5px 4px 4px;flex:none}
.corner-in{width:21px;height:17px;background:#fff;display:flex;align-items:center;justify-content:center}
.ruler{margin:5px 0 0 767px;width:562px;height:16px;position:relative;flex:none;
  background:linear-gradient(90deg,#c6c6c6 34px,#9e9e9e 34px,#9e9e9e 45px,#fff 45px,#fff 67px,#a8a8a8 67px,#a8a8a8 78px,#fff 78px,#fff 231px,#a8a8a8 231px,#a8a8a8 241px,#fff 241px,#fff 444px,#a8a8a8 444px,#a8a8a8 456px,#fff 456px,#fff 516px,#9e9e9e 516px,#9e9e9e 526px,#c6c6c6 526px)}
.ticks{display:flex;margin-left:-7px;font:9px/16px "Liberation Sans",sans-serif;color:#555}
.ticks span{flex:0 0 20.8px;text-align:center}
.mk-a{position:absolute;left:451px;top:-3px}
.mk-b{position:absolute;left:512px;top:10px}
.pages{display:grid;grid-template-columns:562px 562px;gap:12px 11px;padding-left:224px;flex:none}
.page{height:793px;background:#fff;border:1px solid #c6c6c6;position:relative;display:flex;flex-direction:column}
.crop{position:absolute;width:17px;height:17px;border:0 solid #a0a0a0}
.crop.tl{left:49px;top:49px;border-width:0 1px 1px 0}
.crop.tr{left:492px;top:49px;border-width:0 0 1px 1px}
.crop.bl{left:49px;top:725px;border-width:1px 1px 0 0}
.crop.br{left:492px;top:725px;border-width:1px 0 0 1px}
.pm{color:#b5b5b5;font-size:8px;font-weight:normal;font-family:"DejaVu Sans",sans-serif;margin-left:1px;letter-spacing:0}
.pg-head{margin-top:37px;padding-left:6px;height:16px;line-height:16px;text-align:center;color:#9dbede;font-weight:bold;font-size:11.5px;letter-spacing:.6px;flex:none}
.pg-title{margin:16px 0 0;padding-left:6px;height:20px;line-height:20px;text-align:center;font-size:15px;font-weight:bold;color:#000;flex:none;letter-spacing:.2px}
.grid{border-collapse:collapse;table-layout:fixed;width:489px;margin-left:34px;flex:none;color:#000;font-size:9.5px}
.p1 .grid{margin-top:33px}
.p2 .grid{margin-top:11px;margin-left:35px}
.c1{width:53px}.c2{width:71px}.c3{width:303px}.c4{width:62px}
.grid th,.grid td{border:1px solid #000;padding:0;position:relative}
.hd{height:14px}
.hd th{font-size:8.5px;font-weight:normal;line-height:12px;text-align:center;overflow:visible;white-space:nowrap}
.hd .resp{font-size:9.5px;letter-spacing:.5px}
.nob{border-bottom:none !important}
.not{border-top:none !important}
.h304{height:304px}.h162{height:162px}.h89{height:89px}.h203{height:203px}.h404{height:404px}
.cat{text-align:center;font-size:9.5px;line-height:20px;white-space:nowrap;padding-left:3px !important}
.cat b{font-size:11px}
.lab{text-align:center;font-size:9px;line-height:11px;white-space:nowrap;padding-left:5px !important}
.txt{vertical-align:top;padding:0 6px 0 5px !important}
.lines{margin-top:-3.5px}
.lines.low{margin-top:10px}
.ln{height:20.1px;line-height:20.1px;letter-spacing:.8px;white-space:nowrap;-webkit-text-stroke:.1px #000}
.ln.fit{text-align:justify;text-align-last:justify;letter-spacing:.5px}
.ln u{text-decoration:underline wavy #3b6fd4 1px;text-underline-offset:2px}
.resp-c{text-align:center;line-height:12px}
.resp-c.start{text-align:left;padding:0 0 6px 1px !important}
.eor{position:absolute;left:100%;margin-left:2px;top:0;color:#b5b5b5;font:9px/12px "DejaVu Sans",sans-serif;letter-spacing:0}
.redbox{position:absolute;border:4px solid #cb1428}
.rb1{left:468px;top:139px;width:71px;height:547px}
.rb2{left:463px;top:97px;width:55px;height:596px}
.pg-foot{margin-top:auto;margin-bottom:44px;padding-left:6px;text-align:center;font:bold 9.5px/12px "Liberation Sans",sans-serif;color:#8f8f8f;flex:none}

.vscroll{width:16px;flex:none;background:#f3f3f3;margin:31px 0 3px;display:flex;flex-direction:column}
.sb-btn{width:15px;height:15px;background:#fff;border:1px solid #999;display:flex;align-items:center;justify-content:center;flex:none}
.sb-thumb{width:15px;height:17px;background:#fff;border:1px solid #999;margin-top:14px}
.sb-btn.down{margin-top:auto}

.status{height:21px;background:#f1f1f1;border-top:1px solid #c6c6c6;display:flex;align-items:center;flex:none;position:relative;color:#444;line-height:18px;white-space:nowrap;padding-bottom:2px}
.s-page{margin-left:12px;width:123px;letter-spacing:.4px}
.s-words{width:94px;letter-spacing:.3px}
.s-lang{margin-left:18px;width:122px}
.s-acc-t{margin-left:3px;font-weight:bold;color:#444}
.s-right{position:absolute;right:14px;top:-1px;height:20px;display:flex;align-items:center}
.s-active{width:40px;height:21px;background:#c6c6c6;display:flex;align-items:center;justify-content:center;margin-left:13px}
.s-web{margin-left:13px}
.z-minus{margin-left:19px;width:12px;font:14px/20px "Liberation Sans",sans-serif;color:#444}
.slider{width:100px;height:1px;background:#555;position:relative;flex:none}
.s-tick{position:absolute;left:49px;top:-3px;width:1px;height:7px;background:#555}
.s-thumb{position:absolute;left:33px;top:-8px;width:5px;height:16px;background:#444}
.z-plus{margin-left:5px;width:10px;font:15px/20px "Liberation Sans",sans-serif;color:#444}
.z-val{margin-left:11px;width:25px;font:13px/20px "Liberation Sans",sans-serif;color:#555}

.taskbar{height:6px;background:#2f3826;display:flex}
.tb-a{margin-left:300px;width:48px;background:#b0692a}
.tb-b{margin-left:491px;width:48px;background:#5b6450}
```
